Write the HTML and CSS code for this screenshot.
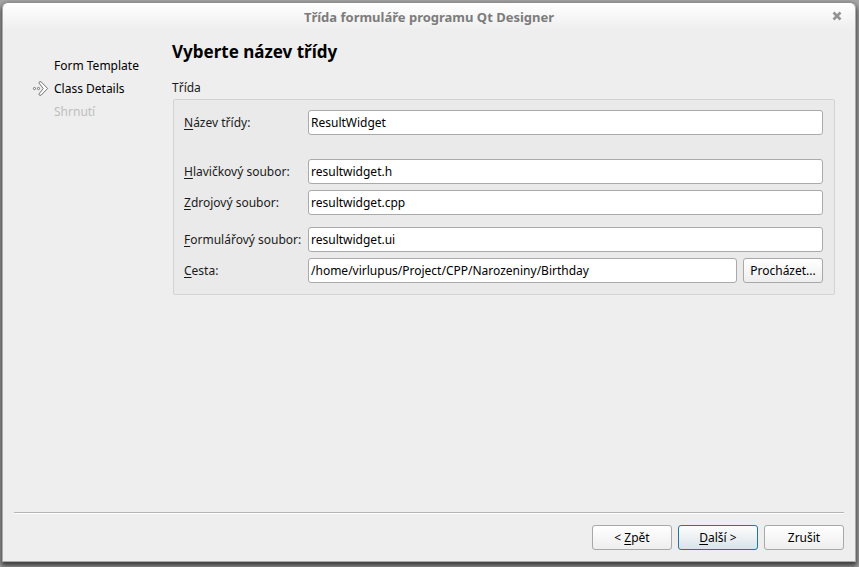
FILE: index.html
```html
<!DOCTYPE html>
<html lang="cs">
<head>
    <meta charset="UTF-8">
    <meta name="viewport" content="width=device-width, initial-scale=1.0">
    <title>Třída formuláře programu Qt Designer</title>
    <link rel="stylesheet" href="styles.css">
</head>
<body>
<form class="window">
    <header class="titlebar">
        <h1>Třída formuláře programu Qt Designer</h1>
        <button class="close" type="button" aria-label="Zavřít">
            <svg width="10" height="10" viewBox="0 0 10 10"><path d="M1.5 1.5 8.5 8.5M8.5 1.5 1.5 8.5" stroke="#929292" stroke-width="2.6"/></svg>
        </button>
    </header>
    <div class="wizard">
        <ol class="steps">
            <li>Form Template</li>
            <li class="current">
                <svg class="arrow" width="17" height="17" viewBox="0 0 17 17" fill="#fff" stroke="#666" stroke-width="0.9">
                    <circle cx="2.5" cy="8.5" r="1.1"/>
                    <circle cx="6.5" cy="8.5" r="1.1"/>
                    <path d="M6.9 2.9Q7.3 .8 9.2 1.9L15.6 8.5 9.2 15.1Q7.3 16.2 6.9 14.1L11.2 8.5Z" stroke-linejoin="round"/>
                </svg>
                Class Details
            </li>
            <li class="disabled">Shrnutí</li>
        </ol>
        <main class="page">
            <h2>Vyberte název třídy</h2>
            <fieldset>
                <legend>Třída</legend>
                <div class="group">
                    <label for="class-name"><u>N</u>ázev třídy:</label>
                    <input id="class-name" class="section-end" type="text" value="ResultWidget">
                    <label for="header-file"><u>H</u>lavičkový soubor:</label>
                    <input id="header-file" type="text" value="resultwidget.h">
                    <label for="source-file"><u>Z</u>drojový soubor:</label>
                    <input id="source-file" class="files-end" type="text" value="resultwidget.cpp">
                    <label for="form-file"><u>F</u>ormulářový soubor:</label>
                    <input id="form-file" type="text" value="resultwidget.ui">
                    <label for="path"><u>C</u>esta:</label>
                    <div class="path">
                        <input id="path" type="text" value="/home/virlupus/Project/CPP/Narozeniny/Birthday">
                        <button class="btn" type="button">Procházet...</button>
                    </div>
                </div>
            </fieldset>
        </main>
    </div>
    <footer class="buttons">
        <button class="btn" type="button">&lt; <u>Z</u>pět</button>
        <button class="btn primary" type="button"><u>D</u>alší &gt;</button>
        <button class="btn" type="button">Zrušit</button>
    </footer>
</form>
</body>
</html>
```

FILE: styles.css
```css
* {
    box-sizing: border-box;
}

body {
    display: flex;
    height: 100vh;
    margin: 0;
    padding: 2px 3px 5px 2px;
    background-color: #a6a6a6;
    font-family: "Noto Sans", sans-serif;
    font-size: 12px;
    line-height: 17px;
    color: #1a1a1a;
    overflow: hidden;
}

.window {
    flex: 1;
    display: flex;
    flex-direction: column;
    border: 1px solid #a9acaa;
    border-top-color: #8e8e8e;
    border-radius: 6px 6px 0 0;
    background: linear-gradient(#fff, #eee 27px);
    box-shadow: 0 3px 5px 1px #3c3c3c;
}

.titlebar {
    display: grid;
    grid-template-columns: 1fr auto 1fr;
    align-items: center;
    height: 28px;
    padding: 0 13px;
}

.titlebar h1 {
    grid-column: 2;
    margin: 0;
    font-size: 13px;
    color: #7c7c7c;
}

.close {
    justify-self: end;
    display: flex;
    padding: 0 0 2px;
    border: none;
    background: none;
}

.wizard {
    flex: 1;
    display: flex;
    padding: 8px 20px 0 28px;
}

.steps {
    width: 141px;
    margin: 0;
    padding: 15px 0 0 23px;
    list-style: none;
    line-height: 23px;
    color: #000;
}

.steps .current {
    display: flex;
    align-items: center;
    gap: 5px;
    margin-left: -22px;
}

.steps .disabled {
    color: #bebebe;
}

.page {
    flex: 1;
}

h2 {
    margin: 0 0 15px;
    font-size: 17px;
    line-height: 25px;
    color: #000;
}

fieldset {
    min-width: 0;
    margin: 0;
    padding: 0;
    border: none;
}

legend {
    padding: 0;
}

.group {
    display: grid;
    grid-template-columns: 118px 1fr;
    column-gap: 6px;
    row-gap: 6px;
    margin: 3px 0 0 1px;
    padding: 10px 11px 11px 10px;
    border: 1px solid #d3d3d3;
    border-radius: 2px;
    background-color: #eaeaea;
}

.group label {
    line-height: 25px;
    white-space: nowrap;
}

u {
    text-decoration: underline;
    text-decoration-thickness: 1px;
    text-underline-offset: 2px;
}

input {
    width: 100%;
    min-width: 0;
    height: 25px;
    padding: 0 2px;
    border: 1px solid #aaa;
    border-radius: 3px;
    background-color: #fff;
    font: inherit;
    color: #000;
}

.section-end {
    margin-bottom: 18px;
}

.files-end {
    margin-bottom: 6px;
}

.path {
    display: flex;
    gap: 6px;
}

.btn {
    flex: none;
    width: 80px;
    height: 25px;
    padding: 0;
    border: 1px solid #a8a8a8;
    border-radius: 3px;
    background: linear-gradient(#fff, #eee);
    font: inherit;
    color: #000;
}

.primary {
    border-color: #2373a5;
    background: linear-gradient(#fdfdfd, #dae3e9);
}

.buttons {
    display: flex;
    justify-content: flex-end;
    gap: 6px;
    margin: 0 11px;
    padding: 12px 0 11px;
    border-top: 1px solid #b4b4b4;
    box-shadow: inset 0 1px #fff;
}
```
